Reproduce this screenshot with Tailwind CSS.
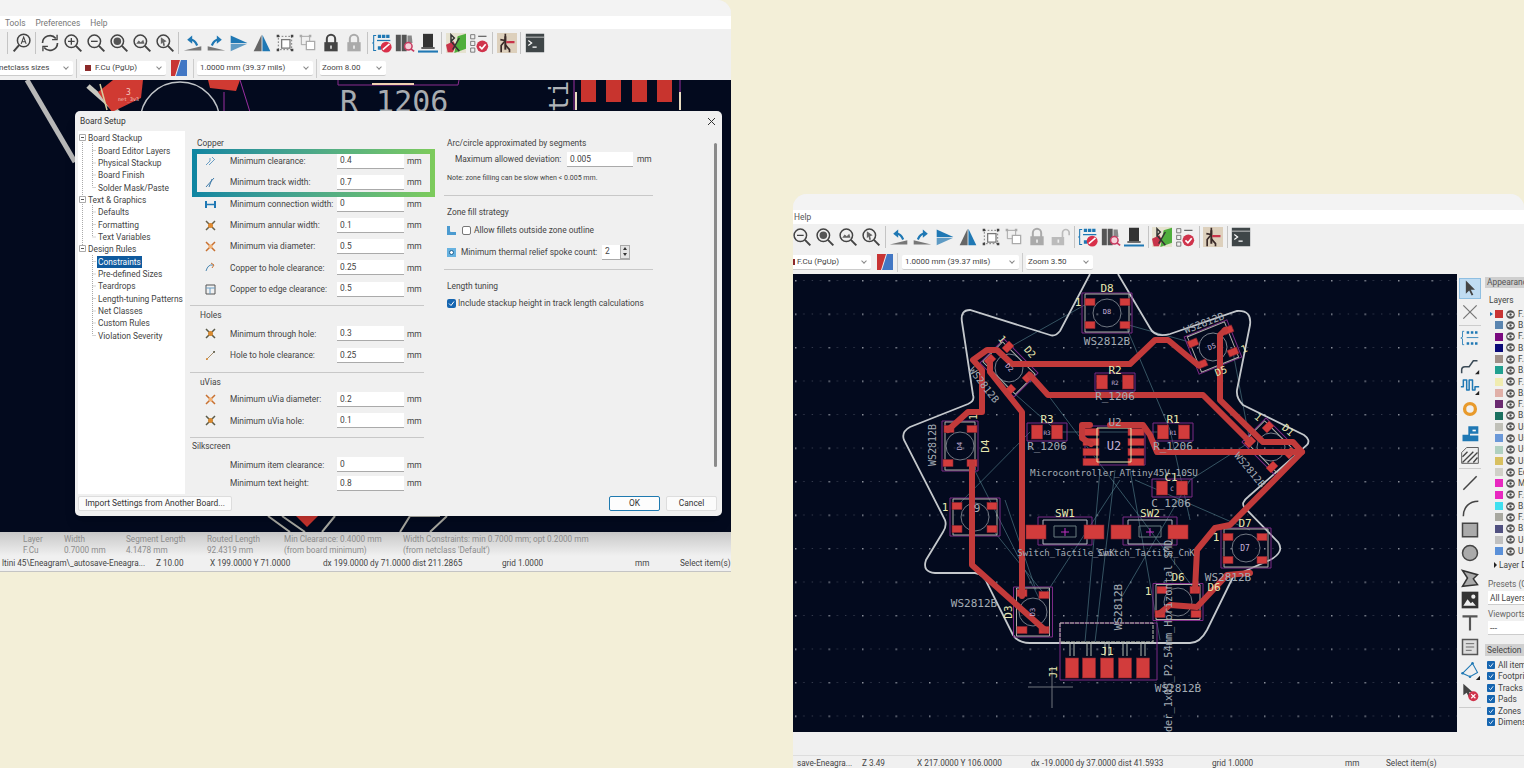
<!DOCTYPE html>
<html lang="en">
<head>
  <meta charset="UTF-8" />
  <title>KiCad board setup</title>
  <script src="https://cdn.jsdelivr.net/npm/@tailwindcss/browser@4"></script>
</head>
<body class="relative w-[1524px] h-[768px] overflow-hidden bg-[#f3efd8] text-[#444] font-['Roboto',sans-serif] text-[8.4px] leading-none whitespace-nowrap">

  <!-- shared toolbar icons -->
  <svg class="hidden">
    <symbol id="i-zoom" viewBox="0 0 24 24"><circle cx="10" cy="10" r="7.5" fill="none" stroke="#444" stroke-width="1.8"/><path d="M15.5 15.5 22 22" stroke="#444" stroke-width="2.4"/></symbol>
    <symbol id="i-search" viewBox="0 0 24 24"><circle cx="14" cy="9" r="7.5" fill="none" stroke="#444" stroke-width="1.8"/><path d="M8.5 14.5 2 22" stroke="#444" stroke-width="2.4"/><path d="M11 13 14 5l3 8M12 10.500h4" fill="none" stroke="#444" stroke-width="1.300"/></symbol>
    <symbol id="i-refresh" viewBox="0 0 24 24"><path d="M3 12a9 9 0 0 1 16-5.500M21 12a9 9 0 0 1-16 5.500" fill="none" stroke="#444" stroke-width="2"/><path d="M20.500 2v6h-6M3.500 22v-6h6" fill="none" stroke="#444" stroke-width="1.600"/></symbol>
    <symbol id="i-in" viewBox="0 0 24 24"><use href="#i-zoom"/><path d="M6 10h8M10 6v8" stroke="#444" stroke-width="1.600"/></symbol>
    <symbol id="i-out" viewBox="0 0 24 24"><use href="#i-zoom"/><path d="M6 10h8" stroke="#444" stroke-width="1.600"/></symbol>
    <symbol id="i-fit" viewBox="0 0 24 24"><use href="#i-zoom"/><circle cx="10" cy="10" r="4.500" fill="#555"/></symbol>
    <symbol id="i-obj" viewBox="0 0 24 24"><use href="#i-zoom"/><path d="M5 13l3-4 2.500 2 3-3 1.500 5z" fill="#666"/></symbol>
    <symbol id="i-sel" viewBox="0 0 24 24"><use href="#i-zoom"/><path d="M7 5l7 5-3 1 1 4-2 .5-1-4-2 2z" fill="#666"/></symbol>
    <symbol id="i-ccw" viewBox="0 0 24 24"><path d="M1 21 22 21 22 16z" fill="#777"/><path d="M17 15C15 10 13 8 9 8" fill="none" stroke="#1f78b4" stroke-width="2.600"/><path d="M11 3 5 8l6 5z" fill="#1f78b4"/></symbol>
    <symbol id="i-cw" viewBox="0 0 24 24"><path d="M23 21 2 21 2 16z" fill="#777"/><path d="M7 15c2-5 4-7 8-7" fill="none" stroke="#1f78b4" stroke-width="2.600"/><path d="M13 3l6 5-6 5z" fill="#1f78b4"/></symbol>
    <symbol id="i-flip" viewBox="0 0 24 24"><path d="M2 3 22 12H2z" fill="#1f78b4"/><path d="M2 13H22L2 22z" fill="#5f9bc4"/></symbol>
    <symbol id="i-mirror" viewBox="0 0 24 24"><path d="M11.500 2V22H2z" fill="#666"/><path d="M12.500 2V22H22z" fill="#1f78b4"/></symbol>
    <symbol id="i-group" viewBox="0 0 24 24"><path d="M4 4h16v16H4z" fill="none" stroke="#666" stroke-dasharray="2 2"/><path d="M8 8h10v10H8z" fill="#fff" stroke="#777" stroke-width="1.500"/><path d="M2 2h3v3H2zM19 2h3v3h-3zM2 19h3v3H2zM19 19h3v3h-3z" fill="#444"/></symbol>
    <symbol id="i-ungroup" viewBox="0 0 24 24"><path d="M4 4h10v10H4z" fill="none" stroke="#999"/><path d="M10 10h10v10H10z" fill="#fff" stroke="#aaa" stroke-width="1.500"/><path d="M2 2h3v3H2zM13 2h3v3h-3z" fill="#aaa"/></symbol>
    <symbol id="i-lock" viewBox="0 0 24 24"><path d="M7 12V7a5 5 0 0 1 10 0v5" fill="none" stroke="#444" stroke-width="2.400"/><path d="M4 11h16v11H4z" fill="#444"/><path d="M11 15h2v4h-2z" fill="#ddd"/></symbol>
    <symbol id="i-lockoff" viewBox="0 0 24 24"><path d="M7 12V7a5 5 0 0 1 10 0v5" fill="none" stroke="#aaa" stroke-width="2.400"/><path d="M4 11h16v11H4z" fill="#aaa"/><path d="M11 15h2v4h-2z" fill="#eee"/></symbol>
    <symbol id="i-unlock" viewBox="0 0 24 24"><path d="M15 12V7a4 4 0 0 1 8 0v3" fill="none" stroke="#bbb" stroke-width="2"/><path d="M2 12h15v10H2z" fill="#bbb"/><path d="M9 15h2v4H9z" fill="#eee"/></symbol>
    <symbol id="i-net" viewBox="0 0 24 24"><path d="M7 2h4v4H7zM12 2h4v4h-4zM17 2h4v4h-4zM7 16h4v4H7z" fill="#1f78b4"/><path d="M5 3H2v8l-1 1 1 1v8h3" fill="none" stroke="#1f78b4" stroke-width="1.300"/><path d="M6 9h16" stroke="#1f78b4" stroke-width="1.500"/><circle cx="17" cy="17" r="6.500" fill="#d9304a"/><path d="M13 20l8-7" stroke="#fff" stroke-width="1.800"/></symbol>
    <symbol id="i-lib" viewBox="0 0 24 24"><path d="M1 2h6v20H1zM8 2h6v20H8z" fill="#555"/><path d="M15 3l5 0 1 9h-6z" fill="#888"/><circle cx="16" cy="16" r="4.500" fill="#f4d0d8" stroke="#c83a60" stroke-width="1.800"/><path d="M19 19l4 3" stroke="#c83a60" stroke-width="2"/></symbol>
    <symbol id="i-fp" viewBox="0 0 24 24"><path d="M6 1h12v16H6z" fill="#333"/><path d="M4 17h16v2H4z" fill="#444"/><path d="M0 21h24v2.500H0z" fill="#1f78b4"/></symbol>
    <symbol id="i-board" viewBox="0 0 24 24"><path d="M0 0h24v24H0z" fill="#e6e2d0"/><path d="M14 4 24 1v18L10 24z" fill="#4fae3c"/><path d="M0 14l9-4 3 6-4 7H2z" fill="#c8344a"/><path d="M6 2l4 4-4 4zM6 10l10 12M16 6l-8 14" fill="none" stroke="#333" stroke-width="1.800"/></symbol>
    <symbol id="i-check" viewBox="0 0 24 24"><path d="M2 2h5v5H2zM2 10h5v5H2zM2 18h5v5H2z" fill="none" stroke="#666"/><path d="M11 4h10" stroke="#666" stroke-width="1.500"/><circle cx="16" cy="16" r="7" fill="#d0344c"/><path d="M12.500 16l3 3 4.500-5.500" fill="none" stroke="#fff" stroke-width="2"/></symbol>
    <symbol id="i-sch" viewBox="0 0 24 24"><path d="M0 0h24v24H0z" fill="#ddd0bc" rx="3"/><path d="M10 1v8l-5 6v8M10 9l-6-1M10 14l5 6v3" fill="none" stroke="#3a2a28" stroke-width="2"/><path d="M10 4v16" stroke="#3a2a28" stroke-width="2.400"/><path d="M11 11h10" stroke="#c8344a" stroke-width="2.600"/></symbol>
    <symbol id="i-term" viewBox="0 0 24 24"><path d="M1 1h22v22H1z" fill="#3f4648"/><path d="M1 5h22" stroke="#ddd"/><path d="M4 9l4 3-4 3M9 17h5" fill="none" stroke="#fff" stroke-width="1.400"/></symbol>
    <symbol id="i-swatch" viewBox="0 0 16 16"><path d="M0 0h9L4 16H0z" fill="#c83434"/><path d="M10 0h6v16H5z" fill="#4277c4"/></symbol>
    <symbol id="i-eye" viewBox="0 0 10 10"><circle cx="5" cy="5" r="4.800" fill="#555"/><ellipse cx="5" cy="5" rx="3.600" ry="2.200" fill="#eee"/><circle cx="5" cy="5" r="1.300" fill="#444"/></symbol>
  </svg>

  <!-- left window -->
  <div class="absolute left-0 top-0 w-[731px] h-[572px] rounded-tr-[14px] overflow-hidden bg-[#f0f0f0] flex flex-col">
    <div class="h-[16px] bg-[#f3f3f3] shrink-0"></div>
    <div class="h-[13px] bg-white shrink-0 flex items-center gap-[10px] pl-[5px] pt-[1px] text-[#777]"><span>Tools</span><span>Preferences</span><span>Help</span></div>
    <div id="tools-left" class="h-[27px] shrink-0 flex items-center pl-[5px]"></div>
    <div class="h-[24px] shrink-0 flex items-center text-[8px]">
      <div class="w-[73px] h-[15px] bg-white rounded-r-[2px] border-b border-[#ccc] flex items-center justify-between pr-[5px]"><span class="-ml-[1px]">netclass sizes</span><span class="w-[4px] h-[4px] -mt-[2px] border-r border-b border-[#888] rotate-45"></span></div>
      <div class="w-px h-[19px] bg-[#ccc] mx-[3px]"></div>
      <div class="w-[86px] h-[15px] bg-white rounded-[2px] border-b border-[#ccc] flex items-center justify-between px-[5px]"><span class="flex items-center gap-[4px]"><span class="w-[6px] h-[6px] bg-[#8c2a2a]"></span>F.Cu (PgUp)</span><span class="w-[4px] h-[4px] -mt-[2px] border-r border-b border-[#888] rotate-45"></span></div>
      <svg class="w-[16px] h-[16px] ml-[5px]"><use href="#i-swatch"/></svg>
      <div class="w-px h-[19px] bg-[#ccc] ml-[6px] mr-[3px]"></div>
      <div class="w-[116px] h-[15px] bg-white rounded-[2px] border-b border-[#ccc] flex items-center justify-between px-[3px] pr-[5px]"><span>1.0000 mm (39.37 mils)</span><span class="w-[4px] h-[4px] -mt-[2px] border-r border-b border-[#888] rotate-45"></span></div>
      <div class="w-px h-[19px] bg-[#ccc] mx-[3px]"></div>
      <div class="w-[66px] h-[15px] bg-white rounded-[2px] border-b border-[#ccc] flex items-center justify-between px-[2px] pr-[5px]"><span>Zoom 8.00</span><span class="w-[4px] h-[4px] -mt-[2px] border-r border-b border-[#888] rotate-45"></span></div>
    </div>
    <svg class="w-[731px] h-[452px] shrink-0 bg-[#030a1e] font-['DejaVu_Sans_Mono',monospace]" viewBox="0 80 731 452">
      <path d="M27 80 75 162" fill="none" stroke="#b8b8b8" stroke-width="5"/>
      <path d="M88 86 122 116" fill="none" stroke="#c8c8c0" stroke-width="5"/>
      <path d="M113 80H143L141 98 112 112 98 92z" fill="#d03a32"/>
      <text x="126" y="95" fill="#f4c8c0" font-size="8">3</text>
      <text x="118" y="101" fill="#f4c8c0" font-size="5">net_3v3</text>
      <path d="M100 84 107 110" stroke="#d8d0a0" stroke-width="1.500"/>
      <circle cx="180" cy="122" r="40" fill="none" stroke="#c0c4c8" stroke-width="1.500"/>
      <path d="M208 80h32l-4 11-26-3z" fill="#d03a32"/>
      <path d="M240 80 250 112M224 92v20" stroke="#9a2fa0" fill="none"/>
      <path d="M338 80v5h120l1-5" fill="none" stroke="#8c2c90"/>
      <path d="M372 84h42" stroke="#f0d0b0" stroke-width="2"/>
      <text x="340" y="112" fill="#a8acb0" font-size="30">R 1206</text>
      <text transform="translate(568 112) rotate(-90)" fill="#b0b4b8" font-size="26">ti</text>
      <path d="M574 80v30M680 80v30" stroke="#9a2fa0"/>
      <path d="M581 80h15v22h-15zM606 80h15v22h-15zM632 80h15v22h-15zM657 80h15v22h-15z" fill="#c8342e"/>
      <path d="M576 92v18M680 92v18" stroke="#e8dcc0" stroke-width="2"/>
      <path d="M268 516 290 532M282 516 305 532M322 532 335 516M400 532 410 516 440 516M430 532 447 516" fill="none" stroke="#a8a8a0" stroke-width="2"/>
      <path d="M296 516h22l-11 11z" fill="#c8342e"/>
    </svg>
    <div class="h-[24px] shrink-0 bg-linear-to-b from-[#c8c8c8] to-[#f0f0f0] flex pt-[3px] text-[#8c8c8c] text-[8.200px] relative">
      <div class="absolute left-[23px] top-[3px]"><p>Layer</p><p class="mt-[3px]">F.Cu</p></div>
      <div class="absolute left-[64px] top-[3px]"><p>Width</p><p class="mt-[3px]">0.7000 mm</p></div>
      <div class="absolute left-[126px] top-[3px]"><p>Segment Length</p><p class="mt-[3px]">4.1478 mm</p></div>
      <div class="absolute left-[207px] top-[3px]"><p>Routed Length</p><p class="mt-[3px]">92.4319 mm</p></div>
      <div class="absolute left-[284px] top-[3px]"><p>Min Clearance: 0.4000 mm</p><p class="mt-[3px]">(from board minimum)</p></div>
      <div class="absolute left-[403px] top-[3px]"><p>Width Constraints: min 0.7000 mm; opt 0.2000 mm</p><p class="mt-[3px]">(from netclass 'Default')</p></div>
    </div>
    <div class="h-[16px] shrink-0 flex items-center border-b border-[#c4c4c4] relative text-[8.200px]">
      <span class="absolute left-[2px]">ltini 45\Eneagram\_autosave-Eneagra...</span>
      <span class="absolute left-[156px]">Z 10.00</span>
      <span class="absolute left-[210px]">X 199.0000 Y 71.0000</span>
      <span class="absolute left-[323px]">dx 199.0000 dy 71.0000 dist 211.2865</span>
      <span class="absolute left-[502px]">grid 1.0000</span>
      <span class="absolute left-[635px]">mm</span>
      <span class="absolute left-[680px]">Select item(s)</span>
    </div>
  </div>

  <!-- board setup dialog -->
  <div class="absolute left-[75px] top-[111px] w-[647px] h-[405px] bg-[#f0f0f0] rounded-[5px] shadow-lg flex flex-col">
    <div class="h-[20px] shrink-0 flex items-center justify-between pl-[5px] pr-[6px] text-[#333]"><span>Board Setup</span>
      <svg class="w-[9px] h-[9px]" viewBox="0 0 9 9"><path d="M1 1l7 7M8 1 1 8" stroke="#333" fill="none"/></svg></div>
    <div class="h-[363px] shrink-0 flex relative">
      <div id="tree" class="relative w-[107px] ml-[3px] h-full bg-white pt-[1.500px]"></div>
      <div class="w-[255px] pl-[5px] pt-0 shrink-0 text-[#444]">
        <p class="h-[18px] pl-[7px] pt-[6px] flex items-center">Copper</p>
        <div class="ml-[2px] w-[243px] h-[48px] p-[5px] bg-linear-to-r from-[#0e85a2] to-[#7dcb5b]">
          <div id="g0" class="bg-[#f0f0f0] h-full flex flex-col gap-[7.5px]"></div>
        </div>
        <div id="g1" class="pl-[7px] flex flex-col gap-[7.3px]"></div>
        <div class="h-px w-[234px] bg-[#c8c8c8] mt-[9px]"></div>
        <p class="h-[12px] mt-[3.5px] pl-[10px] flex items-center">Holes</p>
        <div id="g2" class="pl-[7px] mt-[5.3px] flex flex-col gap-[7.3px]"></div>
        <div class="h-px w-[234px] bg-[#c8c8c8] mt-[9.700px]"></div>
        <p class="h-[12px] mt-[3px] pl-[10px] flex items-center">uVias</p>
        <div id="g3" class="pl-[7px] mt-[4.500px] flex flex-col gap-[7.3px]"></div>
        <div class="h-px w-[234px] bg-[#c8c8c8] mt-[9px]"></div>
        <p class="h-[12px] mt-[2.200px] pl-[2px] flex items-center">Silkscreen</p>
        <div id="g4" class="pl-[7px] mt-[6px] flex flex-col gap-[4.500px]"></div>
      </div>
      <div class="w-[215px] ml-[4px] pl-[3px] text-[#444]">
        <p class="h-[12px] mt-[6px] flex items-center">Arc/circle approximated by segments</p>
        <div class="flex items-center h-[15px] mt-[3px] pl-[8px]"><span class="w-[112px]">Maximum allowed deviation:</span><span class="w-[66px] h-[15px] bg-white border-b border-[#aaa] flex items-center pl-[3px]">0.005</span><span class="ml-[4px]">mm</span></div>
        <p class="h-[10px] mt-[6px] flex items-center text-[7.050px]">Note: zone filling can be slow when &lt; 0.005 mm.</p>
        <div class="h-px w-[209px] -ml-[3px] bg-[#c8c8c8] mt-[12px]"></div>
        <p class="h-[12px] mt-[10px] flex items-center">Zone fill strategy</p>
        <div class="flex items-center h-[12px] mt-[6px]">
          <svg class="w-[9px] h-[9px]" viewBox="0 0 9 9"><path d="M0 0h3v5q0 1 1 1h5v3H0z" fill="#4c9bd0"/></svg>
          <span class="w-[9px] h-[9px] ml-[6px] bg-white border border-[#777] rounded-[2px]"></span><span class="ml-[3px]">Allow fillets outside zone outline</span>
        </div>
        <div class="flex items-center h-[16px] mt-[8px]">
          <svg class="w-[9px] h-[9px]" viewBox="0 0 9 9"><path d="M0 0h9v9H0z" fill="#67b2e0"/><circle cx="4.500" cy="4.500" r="2" fill="#fff" stroke="#1b5f90"/></svg>
          <span class="ml-[5px] w-[141px]">Minimum thermal relief spoke count:</span>
          <span class="w-[28px] h-[15px] bg-white border-b border-[#aaa] flex items-center justify-between pl-[3px]">2<span class="w-[10px] h-[14px] bg-[#e4e4e4] border border-[#aaa] flex flex-col items-center justify-around"><span class="w-0 h-0 border-x-[2.500px] border-x-transparent border-b-[3px] border-b-[#333]"></span><span class="w-0 h-0 border-x-[2.500px] border-x-transparent border-t-[3px] border-t-[#333]"></span></span></span>
        </div>
        <div class="h-px w-[209px] -ml-[3px] bg-[#c8c8c8] mt-[9px]"></div>
        <p class="h-[12px] mt-[10px] flex items-center">Length tuning</p>
        <div class="flex items-center h-[12px] mt-[5px]">
          <span class="w-[9px] h-[9px] bg-[#1565b0] rounded-[2px] flex items-center justify-center"><svg class="w-[7px] h-[7px]" viewBox="0 0 7 7"><path d="M1 3.500 3 5.500 6 1.500" fill="none" stroke="#fff"/></svg></span><span class="ml-[2px]">Include stackup height in track length calculations</span>
        </div>
      </div>
      <div class="absolute right-[5px] top-[12px] w-[3px] h-[324px] bg-[#8a8a8a] rounded-full"></div>
    </div>
    <div class="flex items-start pl-[3px] pr-[5px] pt-[2px]">
      <span class="w-[154px] h-[15px] bg-[#fbfbfb] border border-[#ddd] rounded-[2px] flex items-center justify-center text-[#333]">Import Settings from Another Board...</span>
      <span class="ml-auto w-[51px] h-[15px] bg-[#fdfdfd] border border-[#1f7ab0] rounded-[2px] flex items-center justify-center text-[#333]">OK</span>
      <span class="ml-[6px] w-[51px] h-[15px] bg-[#fbfbfb] border border-[#ddd] rounded-[2px] flex items-center justify-center text-[#333]">Cancel</span>
    </div>
  </div>

  <!-- right window -->
  <div class="absolute left-[793px] top-[194px] w-[731px] h-[574px] rounded-t-[14px] overflow-hidden bg-[#f0f0f0] flex flex-col">
    <div class="h-[16px] bg-[#f3f3f3] shrink-0"></div>
    <div class="h-[14px] bg-white shrink-0 flex items-center pl-[1px] text-[#555]">Help</div>
    <div id="tools-right" class="h-[26px] shrink-0 flex items-center -ml-[2.500px]"></div>
    <div class="h-[24px] shrink-0 flex items-center text-[8px]">
      <div class="w-[78px] h-[15px] bg-white rounded-r-[2px] border-b border-[#ccc] flex items-center justify-between pr-[5px]"><span class="flex items-center gap-[2px]"><span class="w-[2px] h-[6px] bg-[#8c2a2a]"></span>F.Cu (PgUp)</span><span class="w-[4px] h-[4px] -mt-[2px] border-r border-b border-[#888] rotate-45"></span></div>
      <svg class="w-[16px] h-[16px] ml-[6px]"><use href="#i-swatch"/></svg>
      <div class="w-px h-[19px] bg-[#ccc] ml-[4px] mr-[4px]"></div>
      <div class="w-[117px] h-[15px] bg-white rounded-[2px] border-b border-[#ccc] flex items-center justify-between px-[3px] pr-[5px]"><span>1.0000 mm (39.37 mils)</span><span class="w-[4px] h-[4px] -mt-[2px] border-r border-b border-[#888] rotate-45"></span></div>
      <div class="w-px h-[19px] bg-[#ccc] mx-[3px]"></div>
      <div class="w-[67px] h-[15px] bg-white rounded-[2px] border-b border-[#ccc] flex items-center justify-between px-[2px] pr-[5px]"><span>Zoom 3.50</span><span class="w-[4px] h-[4px] -mt-[2px] border-r border-b border-[#888] rotate-45"></span></div>
    </div>
    <div class="h-[458px] shrink-0 flex">
      <svg id="pcb" class="w-[664px] h-[458px] shrink-0 bg-[#030a1e] font-['DejaVu_Sans_Mono',monospace]" viewBox="793 274 664 458"></svg>
      <div id="side-tools" class="w-[26px] shrink-0 relative"></div>
      <div class="w-[41px] shrink-0 overflow-hidden">
        <div class="w-[90px]">
          <div class="h-[11px] mt-[3px] ml-[2px] w-[60px] bg-[#cfcfcf] flex items-center pl-[2px] text-[#555]">Appearance</div>
          <div class="ml-[6px] mt-[7px] h-[10px] flex items-center">Layers</div>
          <div id="layers" class="mt-[3px] flex flex-col gap-[1.300px] ml-[4px] pt-px"></div>
          <div class="ml-[11px] mt-[4px] h-[10px] flex items-center gap-[2px]"><span class="w-0 h-0 border-y-[3px] border-y-transparent border-l-[3px] border-l-[#222]"></span>Layer Display</div>
          <div class="ml-[5px] mt-[9px] h-[10px] flex items-center text-[#666]">Presets (Ctrl+Tab)</div>
          <div class="ml-[5px] mt-[2px] w-[50px] h-[14px] bg-white border-b border-[#ccc] flex items-center pl-[2px]">All Layers</div>
          <div class="ml-[5px] mt-[4px] h-[10px] flex items-center text-[#666]">Viewports</div>
          <div class="ml-[5px] mt-[2px] w-[50px] h-[14px] bg-white border-b border-[#ccc] flex items-center pl-[2px]">---</div>
          <div class="h-[12px] mt-[9px] ml-[2px] w-[60px] bg-[#d0d0d0] flex items-center pl-[2px]">Selection</div>
          <div id="filters" class="mt-[4px] ml-[4px] flex flex-col gap-[2.500px]"></div>
        </div>
      </div>
    </div>
    <div class="h-[36px] relative shrink-0 text-[#444] text-[8.200px]">
      <div class="absolute left-0 right-0 top-[23px] h-px bg-[#ddd]"></div>
      <span class="absolute left-[4px] top-[27px]">save-Eneagra...</span>
      <span class="absolute left-[69px] top-[27px]">Z 3.49</span>
      <span class="absolute left-[124px] top-[27px]">X 217.0000 Y 106.0000</span>
      <span class="absolute left-[238px] top-[27px]">dx -19.0000 dy 37.0000 dist 41.5933</span>
      <span class="absolute left-[419px] top-[27px]">grid 1.0000</span>
      <span class="absolute left-[552px] top-[27px]">mm</span>
      <span class="absolute left-[593px] top-[27px]">Select item(s)</span>
    </div>
  </div>

  <script>
    // top toolbars, same icon set in both windows
    const iconRow = list => list.map(id => id === "|"
      ? '<span class="w-px h-[22px] bg-[#c4c4c4] mx-[2px] shrink-0"></span>'
      : `<svg class="w-[20px] h-[20px] mx-[1.500px] shrink-0"><use href="#i-${id}"/></svg>`).join("");
    const tail = ["ccw","cw","flip","mirror","group","ungroup"];
    const tail2 = ["|","net","lib","fp","|","board","check","|","sch","|","term"];
    document.getElementById("tools-left").innerHTML = iconRow(["|","search","|","refresh","in","out","fit","obj","sel","|",...tail,"lock","lockoff",...tail2]);
    document.getElementById("tools-right").innerHTML = iconRow(["out","fit","obj","sel","|",...tail,"lockoff","unlock",...tail2]);

    // settings tree
    const tree = [["Board Stackup",0],["Board Editor Layers",1],["Physical Stackup",1],["Board Finish",1],["Solder Mask/Paste",1],["Text & Graphics",0],["Defaults",1],["Formatting",1],["Text Variables",1],["Design Rules",0],["Constraints",2],["Pre-defined Sizes",1],["Teardrops",1],["Length-tuning Patterns",1],["Net Classes",1],["Custom Rules",1],["Violation Severity",1]];
    document.getElementById("tree").innerHTML =
      `<svg class="absolute left-0 top-0 w-[107px] h-[220px]" fill="none" stroke="#aaa" stroke-dasharray="1 1">
        <path d="M4.500 7V118M4.500 7h4M4.500 69h4M4.500 118h4M14.500 12V56M14.500 74V106M14.500 124V204M14.500 19.500h4M14.500 32h4M14.500 44h4M14.500 56.500h4M14.500 81h4M14.500 93.500h4M14.500 106h4M14.500 130.500h4M14.500 143h4M14.500 155h4M14.500 167.500h4M14.500 180h4M14.500 192h4M14.500 204.500h4"/>
        <path d="M1.500 3.500h6v6h-6zM1.500 65.500h6v6h-6zM1.500 114.500h6v6h-6z" fill="#fff" stroke-dasharray="none"/><path d="M3 6.500h3M3 68.500h3M3 117.500h3" stroke-dasharray="none" stroke="#555"/></svg>` +
      tree.map(([t, kind]) => kind === 0
        ? `<div class="relative h-[12.330px] pl-[10px] flex items-center">${t.replace("&","&amp;")}</div>`
        : kind === 2
        ? `<div class="relative h-[12.330px] pl-[19px] flex items-center"><span class="bg-[#0f5a9e] text-white h-[12px] px-[1px] flex items-center">${t}</span></div>`
        : `<div class="relative h-[12.330px] pl-[20px] flex items-center">${t}</div>`).join("");

    // constraint rows
    const glyph = {
      clear: '<path d="M1 9 5 5 5 2M4 9 10 3M7 1l2 2" stroke="#6a9ec4" fill="none"/>',
      track: '<path d="M1 10 9 1M4 10 7 2" stroke="#3e7aa8" fill="none"/>',
      conn: '<path d="M1 2v7M10 2v7" stroke="#1f78b4" stroke-width="2"/><path d="M2 5.500h7" stroke="#1f78b4" stroke-width="1.500"/>',
      ann: '<path d="M1 1 10 10M10 1 1 10" stroke="#6a6048" stroke-width="1.500"/><circle cx="5.500" cy="5.500" r="2.500" fill="#e08a30"/>',
      via: '<path d="M1 1 10 10M10 1 1 10" stroke="#c87030" stroke-width="1.500"/><circle cx="5.500" cy="5.500" r="2" fill="#f4b070"/>',
      hole: '<path d="M1 9Q3 2 8 3" stroke="#4a86b0" fill="none"/><path d="M6 1l3 2-2 3" stroke="#c87030" fill="none"/>',
      edge: '<path d="M1 1h9v9H1z" stroke="#555" fill="none"/><path d="M1 4h9M5 4v6" stroke="#6a9ec4" fill="none"/>',
      thru: '<path d="M1 1 10 10M10 1 1 10" stroke="#5a5a48" stroke-width="1.500"/><circle cx="5.500" cy="5.500" r="2.500" fill="#d88a30"/>',
      h2h: '<path d="M1 10 10 1" stroke="#a89070"/><circle cx="2" cy="9" r="1" fill="#d88a30"/><circle cx="9" cy="2" r="1" fill="#5a5a48"/>'
    };
    const row = ([icon, label, val]) => `<div class="h-[14px] flex items-center">
      <span class="w-[26px] flex justify-center">${icon ? `<svg class="w-[11px] h-[11px]" viewBox="0 0 11 11">${glyph[icon]}</svg>` : ""}</span>
      <span class="w-[107px] ml-[7px]">${label}</span>
      <span class="w-[67px] h-[15px] shrink-0 bg-white border-b border-[#aaa] flex items-center pl-[3px]">${val}</span>
      <span class="ml-[3px]">mm</span></div>`;
    const fill = (id, rows) => document.getElementById(id).innerHTML = rows.map(row).join("");
    fill("g0", [["clear","Minimum clearance:","0.4"],["track","Minimum track width:","0.7"]]);
    fill("g1", [["conn","Minimum connection width:","0"],["ann","Minimum annular width:","0.1"],["via","Minimum via diameter:","0.5"],["hole","Copper to hole clearance:","0.25"],["edge","Copper to edge clearance:","0.5"]]);
    fill("g2", [["thru","Minimum through hole:","0.3"],["h2h","Hole to hole clearance:","0.25"]]);
    fill("g3", [["via","Minimum uVia diameter:","0.2"],["thru","Minimum uVia hole:","0.1"]]);
    fill("g4", [["","Minimum item clearance:","0"],["","Minimum text height:","0.8"]]);

    // appearance panel
    const layers = [["#c83434","F.Cu"],["#5a85b0","B.Cu"],["#7a0a80","F.Adhes"],["#0a0a78","B.Adhes"],["#a09088","F.Paste"],["#20a090","B.Paste"],["#f0ecb0","F.Silks"],["#e0b0a8","B.Silks"],["#6a2a70","F.Mask"],["#1a7060","B.Mask"],["#c0c0b8","User.1"],["#6a98d8","User.2"],["#b0d0c0","User.3"],["#d8c060","User.4"],["#d0d0c8","Edge"],["#e828c0","Margin"],["#e828c0","F.Court"],["#40e0f0","B.Court"],["#a8a8a0","F.Fab"],["#505080","B.Fab"],["#c0c0c0","User.5"],["#5a90d8","User.6"]];
    document.getElementById("layers").innerHTML = layers.map(([c, n], i) => `<div class="h-[10px] flex items-center">
      <span class="w-[8px] shrink-0 flex justify-center">${i === 0 ? '<span class="w-0 h-0 border-y-[2.500px] border-y-transparent border-l-[3px] border-l-[#1f78b4]"></span>' : ""}</span>
      <span class="w-[8px] h-[8px] shrink-0" style="background:${c}"></span>
      <svg class="w-[9px] h-[9px] ml-[3px] shrink-0"><use href="#i-eye"/></svg><span class="ml-[3px]">${n}</span></div>`).join("");
    document.getElementById("filters").innerHTML = ["All items","Footprints","Tracks","Pads","Zones","Dimensions"].map(n => `<div class="h-[9px] flex items-center">
      <span class="w-[8px] h-[8px] bg-[#1565b0] rounded-[1px] flex items-center justify-center shrink-0"><svg class="w-[6px] h-[6px]" viewBox="0 0 7 7"><path d="M1 3.500 3 5.500 6 1.500" fill="none" stroke="#fff"/></svg></span><span class="ml-[3px]">${n}</span></div>`).join("");

    // right vertical toolbar
    const side = {
      288: '<path d="M7 3 7 19 11 15 14 21 16 20 13 14 18 14z" fill="#444"/>',
      312: '<path d="M4 4 20 20M20 4 4 20" stroke="#777" stroke-width="1.500"/>',
      338: '<path d="M8 4h3v3H8zM13 4h3v3h-3zM18 4h3v3h-3zM8 17h3v3H8zM13 17h3v3h-3zM18 17h3v3h-3z" fill="#1f78b4"/><path d="M5 4H3v7l-2 1 2 1v7h2" fill="none" stroke="#1f78b4"/><path d="M8 11.500h14" stroke="#1f78b4"/>',
      365: '<path d="M2 22v-4q0-4 4-4h5l5-7h5" fill="none" stroke="#3a4a56" stroke-width="1.800"/><path d="M23 23h-5l5-5z" fill="#222"/>',
      385: '<path d="M1 14h3V6h4v12h3V6h4v12h3v-4h5" fill="none" stroke="#1f78b4" stroke-width="1.800" stroke-linejoin="round"/><path d="M23 24h-5l5-5z" fill="#222"/>',
      409: '<circle cx="12" cy="12" r="6.500" fill="none" stroke="#e89a2c" stroke-width="4"/>',
      433: '<path d="M3 22v-8h7V4h12v9H12v2h10v7z" fill="#1f78b4"/><path d="M15 8h4v2h-4z" fill="#fff"/>',
      455: '<path d="M8 3h14v19H2V9z" fill="#eee" stroke="#444"/><path d="M3 14 9 8M3 21 16 8M9 21l12-12M16 21l5-6" stroke="#444" stroke-width="1.600"/>',
      483: '<path d="M4 20 20 4" stroke="#444" stroke-width="1.800"/>',
      508: '<path d="M4 22C4 11 11 4 22 4" fill="none" stroke="#444" stroke-width="1.800"/>',
      530: '<path d="M3 4h18v16H3z" fill="#aaa" stroke="#444" stroke-width="1.800"/>',
      553: '<circle cx="12" cy="12" r="9" fill="#aaa" stroke="#444" stroke-width="1.800"/>',
      578: '<path d="M3 3 21 8 16 13 21 20 3 22 9 12z" fill="#aaa" stroke="#333" stroke-width="1.800"/>',
      600: '<path d="M2 2h20v20H2z" fill="#333"/><circle cx="16" cy="8" r="2.500" fill="#eee"/><path d="M4 19l5-8 4 5 2-2 4 5z" fill="#eee"/>',
      623: '<path d="M3 4h18M12 4v17" stroke="#555" stroke-width="2.600"/>',
      647: '<path d="M3 3h18v18H3z" fill="#ddd" stroke="#555" stroke-width="1.800"/><path d="M7 8h10M7 12h10M7 16h7" stroke="#555"/>',
      670: '<path d="M3 16 15 4 21 15 12 20 z" fill="none" stroke="#1f78b4" stroke-width="1.300"/><circle cx="3" cy="16" r="1.500" fill="#1f78b4"/><circle cx="15" cy="4" r="1.500" fill="#1f78b4"/><circle cx="12" cy="20" r="1.500" fill="#1f78b4"/><path d="M24 24h-5l5-5z" fill="#222"/>',
      692: '<path d="M4 2 4 16 8 13 11 19 13 18 11 12 15 12z" fill="#444"/><circle cx="16" cy="17" r="6" fill="#d0344c"/><path d="M13.500 14.500l5 5M18.500 14.500l-5 5" stroke="#fff" stroke-width="1.400"/>'
    };
    let sideHtml = '<div class="absolute left-[2px] top-[4px] w-[22px] h-[21px] bg-[#c0dcf2] border border-[#8fbfe2]"></div>';
    for (const y of [325, 468, 707]) sideHtml += `<div class="absolute left-[2px] w-[22px] h-px bg-[#ccc]" style="top:${y - 274}px"></div>`;
    for (const [y, d] of Object.entries(side)) sideHtml += `<svg class="absolute left-[3px] w-[20px] h-[20px]" viewBox="0 0 24 24" style="top:${y - 284}px">${d}</svg>`;
    document.getElementById("side-tools").innerHTML = sideHtml;

    // board drawing, in screen coordinates
    const RED = "#c23a3a", PAD = "#d23c3c", PUR = "#7c2a86", SILK = "#e8e8b0", FAB = "#a4acb4";
    let s = '';
    s += '<defs><pattern id="dots" x="795" y="280" width="33.500" height="33.500" patternUnits="userSpaceOnUse"><path d="M0 0h1.500v1.500H0z" fill="#8a8f9a"/><path d="M8.400 0h1v1h-1zM16.800 0h1v1h-1zM25.100 0h1v1h-1z" fill="#444a5c"/></pattern></defs><rect x="793" y="274" width="664" height="458" fill="url(#dots)"/>';
    // ratsnest
    s += '<g stroke="#5d8d98" stroke-width=".7" fill="none" opacity=".8"><path d="M1010 347 1090 302M1125 324 1193 343M1125 324 1170 430 1190 520M1048 395 1195 590M1045 595 1120 480M1005 500 1036 590M1060 432 1165 432M990 372 1058 432M1250 442 1190 480 1120 600M1233 352 1250 442M992 529 1045 595M1115 470 1095 642M1130 470 1160 640M1135 480 1250 530M1100 470 1085 642M958 505 1030 432M972 465 1040 600"/></g>';
    // outline
    s += '<path d="M1090 274 1060 331Q1055 337 1050 335L970 310Q960 310 962 322L973 395Q975 401 968 404L910 427Q901 432 904 440L945 520Q947 526 943 532L926 560Q922 572 935 573L975 573Q984 574 988 585L1013 635Q1018 643 1030 643L1190 643Q1200 643 1207 630L1233 577Q1240 573 1270 560Q1285 552 1278 542L1245 508Q1240 503 1248 497L1307 445Q1311 440 1304 435L1243 405Q1236 398 1237 390L1250 325Q1252 310 1237 311L1170 334Q1155 338 1150 328L1118 274" fill="none" stroke="#c4c8cc" stroke-width="1.800"/>';
    // footprints
    const box = (x1,y1,x2,y2,c=PUR) => `<path d="M${x1} ${y1}H${x2}V${y2}H${x1}z" fill="none" stroke="${c}"/>`;
    const pad = (x,y,w=11,h=8,r=0) => `<rect x="${x-w/2}" y="${y-h/2}" width="${w}" height="${h}" fill="${PAD}" stroke="#8a2430" stroke-width=".6" ${r?`transform="rotate(${r} ${x} ${y})"`:""}/>`;
    const ring = (x,y,r=16) => `<circle cx="${x}" cy="${y}" r="${r}" fill="none" stroke="#8d939c" stroke-width=".8"/>`;
    const txt = (t,x,y,c=SILK,size=11,r=0) => `<text x="${x}" y="${y}" fill="${c}" font-size="${size}" text-anchor="middle" dominant-baseline="central" ${r?`transform="rotate(${r} ${x} ${y})"`:""}>${t}</text>`;
    const led = (cx,cy,pads,w,h,r) => `<g ${r?`transform="rotate(${r} ${cx} ${cy})"`:""}>${box(cx-w/2,cy-h/2,cx+w/2,cy+h/2)}${box(cx-w/2+3,cy-h/2+1,cx+w/2-3,cy+h/2-1,"#b0b0a8")}${ring(cx,cy,14)}</g>` + pads.map(([x,y]) => pad(x,y,10,7,r)).join("");
    s += led(1107,313,[[1090,302],[1090,325],[1125,302],[1125,325]],50,40,0);
    s += led(1009,368,[[1008,347],[990,360],[1028,377],[1010,390]],34,48,-45);
    s += led(1213,347,[[1193,343],[1202,364],[1228,330],[1233,352]],46,40,-22);
    s += led(1271,447,[[1268,427],[1250,442],[1290,453],[1272,467]],34,48,-45);
    s += led(960,446,[[949,429],[972,429],[948,463],[972,463]],36,50,0);
    s += led(975,517,[[957,506],[992,506],[957,529],[992,529]],50,38,0);
    s += led(1033,612,[[1022,593],[1044,595],[1022,630],[1044,630]],39,50,0);
    s += led(1178,602,[[1162,590],[1195,590],[1160,614],[1196,614]],50,37,0);
    s += led(1246,548,[[1228,537],[1228,560],[1262,537],[1262,560]],50,40,0);
    // resistors and cap
    for (const [cx,cy,a,b] of [[1047,432,1037,1057],[1115,382,1102,1128],[1173,432,1163,1184],[1172,488,1162,1182]]) {
      s += box(cx-20,cy-9,cx+20,cy+9) + pad(a,cy,11,14) + pad(b,cy,11,14);
    }
    // U2
    s += box(1085,426,1145,465);
    for (const y of [432,442,452,462]) s += pad(1091,y,16,7) + pad(1136,y,16,7);
    s += '<path d="M1097 428h34v34h-34z" fill="none" stroke="#e8e8b0"/>';
    // switches
    for (const [cx,a,b] of [[1065,1036,1094],[1150,1121,1178]]) {
      s += box(cx-27,517,cx+27,545) + box(cx-22,520,cx+22,544,"#b8b8c0") + box(cx-11,526,cx+11,537,"#6a7c80") + pad(a,532,20,14) + pad(b,532,20,14);
      s += `<path d="M${cx-4} 532h8M${cx} 528v8" stroke="#c030c0"/>`;
    }
    // J1
    s += box(1060,623,1157,680) + '<path d="M1060 623h93v19h-93z" fill="none" stroke="#c0c4b0" stroke-dasharray="4 1"/>';
    for (const x of [1072,1089,1107,1125,1143]) s += `<path d="M${x-2} 642v14M${x+2} 642v14" stroke="#b0b8b0"/>` + pad(x,668,13,20);
    s += '<path d="M1028 687h45M1052 667v41" stroke="#70757c"/>';
    // tracks
    s += `<g fill="none" stroke="${RED}" stroke-width="6" stroke-linejoin="round" stroke-linecap="round">
      <path d="M948 430 968 412H982V370L973 360 987 350H997L1012 364H1130L1155 340H1168L1198 365"/>
      <path d="M990 362V372L1022 412V596"/>
      <path d="M1030 375 1048 395H1203L1250 442"/>
      <path d="M1225 330 1220 335V400L1263 442H1293L1302 452H1157L1150 435 1143 425H1110"/>
      <path d="M1302 452 1230 525 1215 528 1197 550 1195 590"/>
      <path d="M1250 573 1227 575 1197 607 1170 605 1160 613"/>
      <path d="M972 463V565L1045 630"/>
      <path d="M1090 425H1082V438L1091 444"/></g>`;
    // labels
    s += txt("D8",1107,288) + txt("WS2812B",1107,341,FAB) + txt("1",1078,302) + txt("D8",1107,312,"#c4b0d8",7);
    s += txt("D2",1030,352,SILK,10,50) + txt("WS2812B",984,385,FAB,10,52) + txt("1",1002,339,SILK,10,50) + txt("D2",1009,368,"#c4b0d8",7,50);
    s += txt("WS2812B",1204,323,FAB,10,-21) + txt("D5",1212,347,"#c4b0d8",7,-21) + txt("D5",1221,371,SILK,10,-21) + txt("1",1244,349,SILK,10,-21);
    s += txt("D1",1288,430,SILK,10,40) + txt("1",1258,417,SILK,10,40) + txt("WS2812B",1250,470,FAB,10,50);
    s += txt("D4",985,446,SILK,11,-90) + txt("WS2812B",932,445,FAB,10,-90) + txt("1",973,417,SILK,10,-90) + txt("D4",960,446,"#c4b0d8",7,-90);
    s += txt("1",945,507) + txt("9",977,508,"#a8aeb4") + txt("WS2812B",974,603,FAB) + txt("D3",1008,612,SILK,11,-90) + txt("D3",1033,612,"#c4b0d8",7,-90);
    s += txt("D6",1178,577) + txt("1",1148,591) + txt("D6",1214,587) + txt("D7",1245,523) + txt("1",1216,537) + txt("D7",1245,548,"#c4b0d8",8) + txt("WS2812B",1228,577,FAB);
    s += txt("R3",1047,419) + txt("R_1206",1047,446,FAB) + txt("R3",1047,432,"#c4b0d8",6);
    s += txt("R2",1115,370) + txt("R_1206",1115,396,FAB) + txt("R2",1115,382,"#c4b0d8",6);
    s += txt("R1",1173,419) + txt("R_1206",1173,446,FAB) + txt("R1",1173,432,"#c4b0d8",6);
    s += txt("C1",1171,477) + txt("C_1206",1171,503,FAB) + txt("C",1172,488,"#c4b0d8",6);
    s += txt("U2",1115,422,FAB) + txt("U2",1114,446,"#c4b0d8",12) + txt("Microcontroller_ATtiny45V-10SU",1114,472,FAB,9.3);
    s += txt("SW1",1065,513) + txt("SW2",1150,513) + txt("Switch_Tactile_CnK",1066,553,FAB,9) + txt("Switch_Tactile_CnK",1146,553,FAB,9);
    s += txt("WS2812B",1118,607,FAB,11,-90) + txt("J1",1107,651,SILK) + txt("J1",1053,672,SILK,10,-90) + txt("WS2812B",1178,688,FAB);
    s += txt("der_1x05_P2.54mm_Horizontal_SMD",1168,636,FAB,10.3,-90);
    document.getElementById("pcb").innerHTML = s;
  </script>
</body>
</html>
